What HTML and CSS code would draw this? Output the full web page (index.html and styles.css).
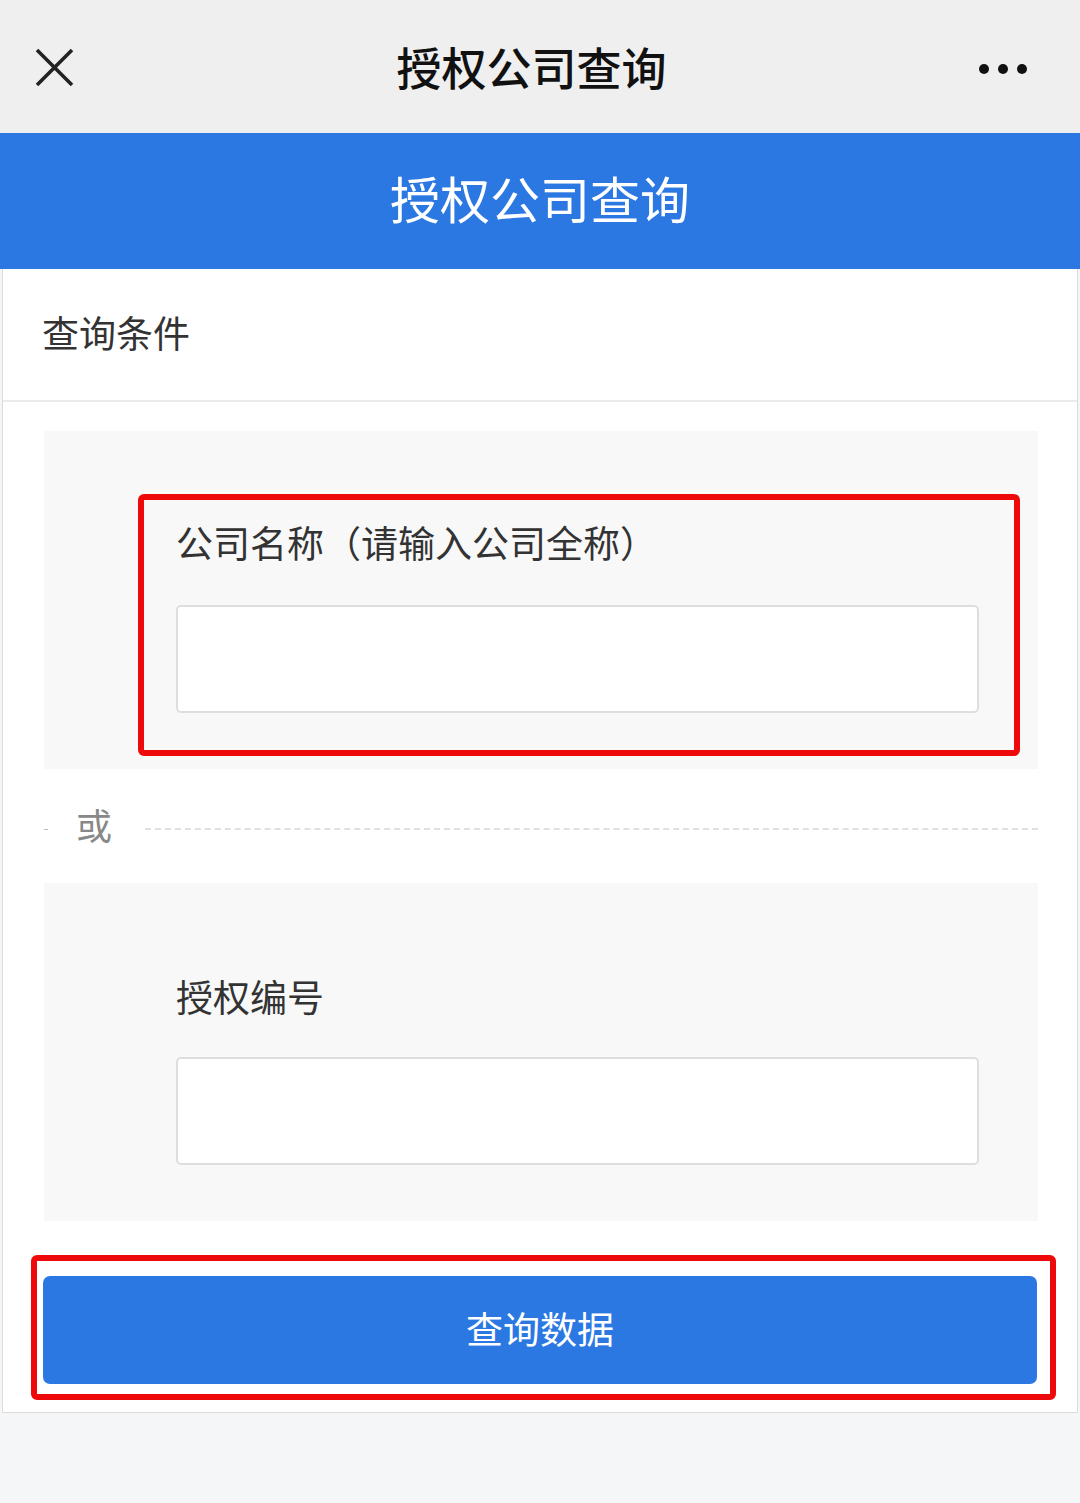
FILE: index.html
```html
<!DOCTYPE html>
<html lang="zh-CN">
<head>
  <meta charset="UTF-8">
  <meta name="viewport" content="width=device-width, initial-scale=1.0">
  <title>授权公司查询</title>
  <link rel="stylesheet" href="styles.css">
</head>
<body>
  <div class="topbar">
    <span class="close">
      <svg width="40" height="40" viewBox="0 0 40 40"><path d="M2 2L37 37M37 2L2 37" stroke="#222" stroke-width="3.6" fill="none"/></svg>
    </span>
    <h1 class="topbar-title">授权公司查询</h1>
    <span class="more">
      <svg width="52" height="14" viewBox="0 0 52 14"><circle cx="6" cy="7" r="5" fill="#111"/><circle cx="25" cy="7" r="5" fill="#111"/><circle cx="44" cy="7" r="5" fill="#111"/></svg>
    </span>
  </div>

  <div class="banner">授权公司查询</div>

  <div class="card">
    <div class="card-head">查询条件</div>
    <div class="card-body">
      <div class="field first">
        <label for="company">公司名称（请输入公司全称）</label>
        <input type="text" id="company">
        <div class="mark mark-field"></div>
      </div>

      <div class="or">
        <span class="or-dash"></span>
        <span class="or-text">或</span>
        <span class="or-line"></span>
      </div>

      <div class="field second">
        <label for="authNo">授权编号</label>
        <input type="text" id="authNo">
      </div>

      <div class="submit-wrap">
        <button class="submit">查询数据</button>
        <div class="mark mark-btn"></div>
      </div>
    </div>
  </div>
</body>
</html>
```

FILE: styles.css
```css
* { box-sizing: border-box; }
body {
  margin: 0;
  background-color: #f5f6f8;
  font-family: "Noto Sans CJK SC", "Noto Sans", sans-serif;
  color: #333;
}

.topbar {
  height: 133px;
  background-color: #efefef;
  display: grid;
  grid-template-columns: 1fr auto 1fr;
  align-items: center;
  padding: 0 50px 0 35px;
}
.close { display: flex; padding-top: 2px; }
.topbar-title {
  margin: 0 0 0 -2px;
  font-size: 45px;
  font-weight: 500;
  color: #111;
}
.more { justify-self: end; display: flex; padding-top: 4px; }

.banner {
  height: 136px;
  background-color: #2b78e2;
  color: #fff;
  font-size: 50px;
  display: flex;
  align-items: center;
  justify-content: center;
  padding-bottom: 9px;
}

.card {
  margin: 0 2px;
  background: #fff;
  border: 1px solid #dcdcdc;
  border-top: none;
}
.card-head {
  height: 133px;
  padding: 0 0 6px 39px;
  display: flex;
  align-items: center;
  font-size: 37px;
  color: #333;
  border-bottom: 2px solid #ebebeb;
}
.card-body {
  padding: 29px 39px 28px 41px;
}

.field {
  position: relative;
  background: #f8f8f8;
  height: 338px;
  padding: 89px 59px 0 132px;
}
.field.second { padding-top: 91px; }
.field label {
  display: block;
  font-size: 37px;
  line-height: 44px;
  color: #333;
}
.field input {
  display: block;
  width: 100%;
  height: 108px;
  margin-top: 41px;
  border: 2px solid #dedede;
  border-radius: 5px;
  background: #fff;
}
.field.second input { margin-top: 39px; }

.or {
  height: 114px;
  display: flex;
  align-items: center;
}
.or-dash {
  width: 4px;
  border-top: 1px solid #bbb;
  margin-top: 6px;
}
.or-text {
  font-size: 36px;
  color: #888;
  margin: 0 33px 4px 28px;
}
.or-line {
  flex: 1;
  border-top: 2px dashed #e0e0e0;
  margin-top: 6px;
}

.submit-wrap {
  position: relative;
  margin-top: 55px;
}
.submit {
  display: block;
  width: 100%;
  height: 108px;
  margin: 0 0 0 -1px;
  border: none;
  border-radius: 7px;
  background-color: #2b78e2;
  color: #fff;
  font-family: inherit;
  font-size: 37px;
  padding-bottom: 6px;
}

/* red annotation boxes */
.mark {
  position: absolute;
  border: 6px solid #ee0a0a;
  border-radius: 6px;
  pointer-events: none;
}
.mark-field { left: 94px; top: 63px; width: 882px; height: 262px; }
.mark-btn { left: -13px; top: -21px; width: 1025px; height: 145px; }
```
